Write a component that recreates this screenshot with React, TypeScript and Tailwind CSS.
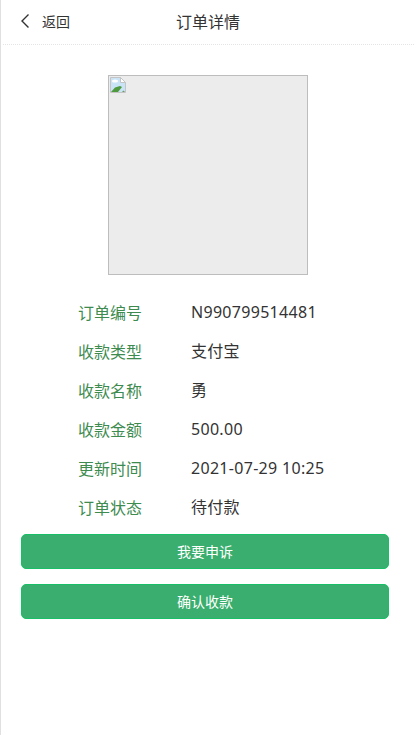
import React from 'react';

const rows = [
  { label: '订单编号', value: 'N990799514481' },
  { label: '收款类型', value: '支付宝' },
  { label: '收款名称', value: '勇' },
  { label: '收款金额', value: '500.00' },
  { label: '更新时间', value: '2021-07-29 10:25' },
  { label: '订单状态', value: '待付款' },
];

const BrokenImage = () => (
  <svg width="16" height="16" viewBox="0 0 16 16" className="block">
    <path d="M0.5 0.5H10.5L15.5 5.5V15.5H0.5Z" fill="#c9e4f7" stroke="#c4c4c4" />
    <path d="M10.5 0.5V5.5H15.5Z" fill="#fff" stroke="#c4c4c4" />
    <ellipse cx="5" cy="4" rx="3" ry="1.6" fill="#fff" />
    <path d="M1 15L5 10.5L10 9L12 10L8 15Z" fill="#4f9a3f" />
    <path d="M12 15L13.5 13.5L15 15Z" fill="#6f9a5f" />
  </svg>
);

const App: React.FC = () => {
  return (
    <div className="h-[735px] w-[414px] overflow-hidden border-l border-[#e0e0e0] bg-white font-['Noto_Sans','Noto_Sans_CJK_SC',sans-serif]">
      {/* Header */}
      <div className="ml-[2px] flex h-[45px] items-center border-b border-dotted border-[#e4e4e4]">
        <div className="flex w-[142px] items-center pl-[16px]">
          <svg width="12" height="16" viewBox="0 0 12 16" fill="none" stroke="#333" strokeWidth="1.4">
            <path d="M9.5 0.5L3 7L9.5 13.5" />
          </svg>
          <span className="ml-[11px] text-sm text-[#333]">返回</span>
        </div>
        <div className="w-[126px] text-center text-base text-[#333]">订单详情</div>
      </div>

      {/* Image placeholder */}
      <div className="mt-[30px] flex justify-center">
        <div className="h-[200px] w-[200px] border border-[#bdbdbd] bg-[#ececec] pl-[1px] pt-[1px]">
          <BrokenImage />
        </div>
      </div>

      {/* Details */}
      <div className="mt-[18px] flex flex-col">
        {rows.map((row) => (
          <div key={row.label} className="flex h-[39px] items-center">
            <span className="ml-[77px] w-[113px] text-base text-[#3d8b4f]">{row.label}</span>
            <span className="mb-[2px] text-base tracking-[0.3px] text-[#333]">{row.value}</span>
          </div>
        ))}
      </div>

      {/* Buttons */}
      <div className="mt-[7px] flex flex-col gap-[15px] pl-[20px]">
        <button className="h-[35px] w-[368px] rounded-[5px] border border-[#19bf66] bg-[#3aae6e] text-sm text-white">我要申诉</button>
        <button className="h-[35px] w-[368px] rounded-[5px] border border-[#19bf66] bg-[#3aae6e] text-sm text-white">确认收款</button>
      </div>
    </div>
  );
};

export default App;
